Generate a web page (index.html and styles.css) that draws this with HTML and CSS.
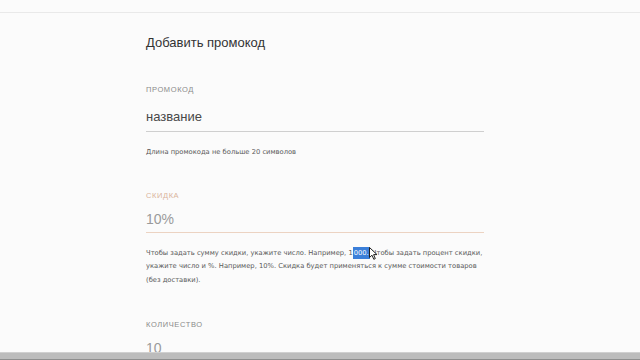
FILE: index.html
```html
<!DOCTYPE html>
<html lang="ru">
<head>
<meta charset="utf-8">
<link rel="stylesheet" href="styles.css">
</head>
<body>
<div class="topbar"></div>
<main class="form">
  <h1 class="title">Добавить промокод</h1>
  <div class="field">
    <div class="label">ПРОМОКОД</div>
    <div class="input">название</div>
    <p class="hint">Длина промокода не больше 20 символов</p>
  </div>
  <div class="field active">
    <div class="label">СКИДКА</div>
    <div class="input muted">10%</div>
    <p class="hint para">Чтобы задать сумму скидки, укажите число. Например, 1<span class="sel">000.</span><span class="cur-wrap"><svg class="cursor" width="9" height="13" viewBox="0 0 9 13"><path d="M0.5 0.5 L0.5 10.5 L3 8.2 L4.8 12.3 L6.3 11.6 L4.6 7.6 L8 7.6 Z" fill="#fff" stroke="#222" stroke-width="1"/></svg></span> Чтобы задать процент скидки, укажите число и %. Например, 10%. Скидка будет применяться к сумме стоимости товаров (без доставки).</p>
  </div>
  <div class="field last">
    <div class="label">КОЛИЧЕСТВО</div>
    <div class="input muted">10</div>
  </div>
</main>
<div class="bottombar"></div>
</body>
</html>
```
FILE: styles.css
```css
html, body {
  margin: 0;
  padding: 0;
  background: #fbfbfb;
  overflow: hidden;
  height: 360px;
}
body {
  font-family: "Liberation Sans", Arial, sans-serif;
  color: #333;
}
.topbar {
  height: 12px;
  border-bottom: 1px solid #e9e9e9;
}
.form {
  margin-left: 146px;
  width: 338px;
  padding-top: 22px;
}
.title {
  margin: 0;
  font-size: 13px;
  font-weight: normal;
  color: #333;
  line-height: 16px;
}
.field {
  margin-top: 34px;
}
.field + .field {
  margin-top: 31px;
}
.field.last {
  margin-top: 33px;
}
.label {
  font-size: 7.5px;
  letter-spacing: 0.6px;
  color: #8a8a8a;
  line-height: 10px;
}
.input {
  margin-top: 14px;
  font-size: 13px;
  line-height: 16px;
  color: #484848;
  padding-bottom: 6px;
  border-bottom: 1px solid #cfcfcf;
}
.input.muted {
  color: #9a9a9a;
  font-size: 14px;
  margin-top: 10px;
  padding-bottom: 5px;
}
.active .label {
  color: #dab49b;
}
.active .input {
  border-bottom-color: #ecd3c2;
}
.hint {
  margin: 14px 0 0;
  font-family: "DejaVu Sans", sans-serif;
  font-size: 6.75px;
  line-height: 13.5px;
  color: #5a5a5a;
}
.para {
  margin-top: 14px;
}
.sel {
  background: #3b7fd9;
  color: #fff;
  padding: 2px 1px;
}
.cur-wrap {
  position: relative;
}
.cursor {
  position: absolute;
  left: -1px;
  top: -2px;
}
.bottombar {
  position: fixed;
  left: 0;
  right: 0;
  bottom: 0;
  height: 6px;
  background: #bcbcbc;
  border-top: 1px solid #d0d0d0;
  border-bottom: 1px solid #8e8e8e;
}
```
